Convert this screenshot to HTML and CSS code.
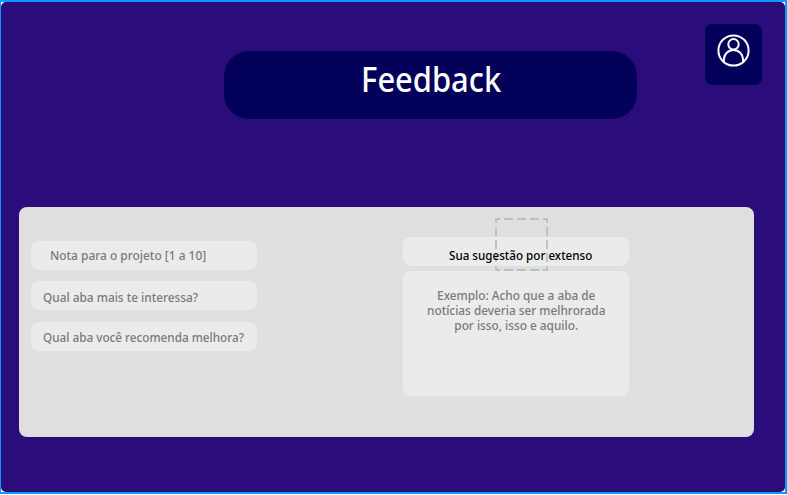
FILE: index.html
```
<!DOCTYPE html>
<html lang="pt-BR">
<head>
<meta charset="utf-8">
<title>Feedback</title>
<link rel="stylesheet" href="styles.css">
</head>
<body>
<div class="frame">
  <main class="screen">
    <header class="header">
      <h1 class="title"><span class="text title-text">Feedback</span></h1>
      <button class="profile" aria-label="Perfil">
        <svg width="34" height="34" viewBox="0 0 34 34" fill="none" stroke="#fff" stroke-width="2">
          <circle cx="16.5" cy="16.5" r="15.1"/>
          <circle cx="16.5" cy="10.3" r="5.2"/>
          <path d="M6.9 28V25.5a9.6 9.6 0 0 1 19.2 0V28"/>
        </svg>
      </button>
    </header>
    <section class="panel">
      <div class="questions">
        <div class="field"><span class="text rating">Nota para o projeto [1 a 10]</span></div>
        <div class="field"><span class="text interest">Qual aba mais te interessa?</span></div>
        <div class="field"><span class="text improve">Qual aba você recomenda melhora?</span></div>
      </div>
      <div class="suggestion">
        <div class="field label"><span class="text label-text">Sua sugestão por extenso</span></div>
        <div class="answer">
          <p class="text example">Exemplo: Acho que a aba de<br>notícias deveria ser melhrorada<br>por isso, isso e aquilo.</p>
        </div>
        <svg class="placeholder" width="53" height="53" viewBox="0 0 53 53" fill="none" stroke="#bebebe" stroke-width="1.8">
          <path stroke-dasharray="9 4" stroke-dashoffset="4.5" d="M.5 1H52.5"/>
          <path stroke-dasharray="9 4" stroke-dashoffset="4.5" d="M.5 52H52.5"/>
          <path stroke-dasharray="9 4" stroke-dashoffset="4.5" d="M1 .5V52.5"/>
          <path stroke-dasharray="9 4" stroke-dashoffset="4.5" d="M52 .5V52.5"/>
        </svg>
      </div>
    </section>
  </main>
</div>
</body>
</html>
```
FILE: styles.css
```
* { box-sizing: border-box; }
body {
  margin: 0;
  background: #fff;
  font-family: "Noto Sans", sans-serif;
}
.frame {
  height: 494px;
  border: 2px solid #0d99ff;
  border-left-width: 1px;
  background: #fff;
}
.screen {
  height: 490px;
  border-radius: 5px;
  background: #2a0d7a;
}
.header {
  display: flex;
  justify-content: space-between;
  align-items: flex-start;
  height: 205px;
  padding: 22px 23px 0 223px;
}
.title {
  display: flex;
  justify-content: center;
  width: 413px;
  height: 68px;
  margin: 27px 0 0;
  padding: 4px 0 0 2px;
  border-radius: 25px;
  background: #020058;
  color: #fff;
  font-size: 34px;
  font-weight: 500;
  line-height: 49px;
}
.profile {
  display: flex;
  justify-content: center;
  width: 57px;
  height: 61px;
  padding: 10px 0 0;
  border: 0;
  border-radius: 7px;
  background: #020058;
}
.panel {
  display: flex;
  gap: 146px;
  width: 735px;
  height: 230px;
  margin-left: 18px;
  padding: 30px 12px 0;
  border-radius: 8px;
  background: #dfdfdf;
}
.questions {
  display: flex;
  flex-direction: column;
  gap: 12px;
  width: 226px;
  padding-top: 4px;
}
.field {
  display: flex;
  height: 29px;
  border-radius: 8px;
  background: #ebebeb;
  line-height: 29px;
}
.questions .field + .field { margin-top: -1px; }
.questions .field:last-child { margin-top: 0; }
.text {
  white-space: nowrap;
  transform-origin: left;
}
.title-text { transform: scaleX(.908); transform-origin: center; }
.questions, .answer { color: #7a7a7a; font-size: 13px; font-weight: 500; }
.rating { margin-left: 19px; transform: scaleX(.917); }
.interest { margin: 2px 0 0 12px; transform: scaleX(.91); }
.improve { margin: 1px 0 0 12px; transform: scaleX(.902); }
.suggestion { position: relative; width: 226px; }
.label { color: #000; font-size: 13px; font-weight: 500; }
.label-text { position: relative; z-index: 1; margin: 4px 0 0 46px; transform: scaleX(.895); }
.answer {
  display: flex;
  justify-content: center;
  height: 125px;
  margin-top: 5px;
  padding-top: 17px;
  border-radius: 8px;
  background: #ebebeb;
  line-height: 15px;
}
.example { margin: 0; text-align: center; transform: scaleX(.908); transform-origin: center; }
.placeholder { position: absolute; left: 92px; top: -19px; }
```
